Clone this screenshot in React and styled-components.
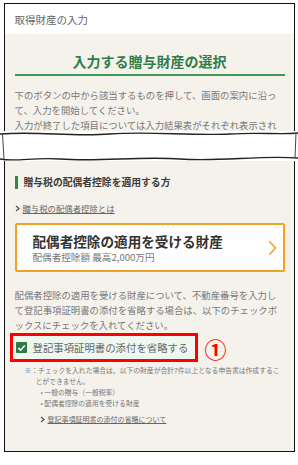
import React from 'react'
import styled, { createGlobalStyle } from 'styled-components'

const Global = createGlobalStyle`
  html, body { margin: 0; padding: 0; background: #fff; }
  body { font-family: "Noto Sans CJK JP", "Noto Sans", sans-serif; }
`

const Page = styled.div`
  width: 298px;
  height: 465px;
  padding-top: 3px;
  box-sizing: border-box;
  display: flex;
  flex-direction: column;
  align-items: center;
`

const Panel = styled.div`
  width: 291px;
  box-sizing: border-box;
  border: 1.5px solid #111;
  border-top-width: ${p => (p.$top ? '1.5px' : '0')};
  border-bottom-width: ${p => (p.$bottom ? '1.5px' : '0')};
  background: #f5f2eb;
  box-shadow: inset -4px 0 0 #f8f6f1;
  overflow: hidden;
  height: ${p => p.$h}px;
`

const Header = styled.div`
  height: 30px;
  background: #fff;
  display: flex;
  align-items: center;
  padding-left: 10px;
  font-size: 10.5px;
  color: #666;
`

const Body = styled.div`
  padding: 0 9px 0 10px;
`

const Title = styled.h1`
  margin: 17px 0 0;
  font-size: 14px;
  font-weight: 700;
  color: #2f7d49;
  text-align: center;
  padding-bottom: 3px;
  border-bottom: 2px solid #3f9a5c;
`

const Para = styled.p`
  margin: ${p => p.$m || '12px 0 0'};
  font-size: 9.4px;
  line-height: 15px;
  color: #777;
`

const Tear = styled.svg`
  display: block;
  width: 298px;
  height: 30px;
`

const Section = styled.h2`
  margin: 14px 0 0;
  display: flex;
  align-items: center;
  gap: 6px;
  font-size: 9.8px;
  font-weight: 700;
  color: #3a3a3a;
  &::before {
    content: '';
    width: 3px;
    height: 13px;
    background: #2f8a4a;
  }
`

const LinkRow = styled.a`
  display: flex;
  align-items: center;
  gap: 3px;
  margin: ${p => p.$m || '13px 0 0'};
  font-size: ${p => p.$fs || 8.4}px;
  color: #666;
  text-decoration: none;
  span { text-decoration: underline; }
`

const Card = styled.div`
  margin-top: 9px;
  border: 2.5px solid #f0a226;
  background: #fff;
  height: 49px;
  box-sizing: border-box;
  display: flex;
  align-items: center;
  padding: 0 6px 0 16px;
  border-radius: 2px;
`

const CardText = styled.div`
  flex: 1;
  display: flex;
  flex-direction: column;
  gap: 1px;
`

const CardTitle = styled.div`
  font-size: 13.6px;
  font-weight: 700;
  color: #333;
  line-height: 18px;
`

const CardSub = styled.div`
  font-size: 9.6px;
  color: #777;
  line-height: 13px;
`

const CheckRow = styled.div`
  display: flex;
  align-items: center;
  gap: 7px;
  margin-left: -5px;
`

const CheckBox = styled.label`
  width: 188px;
  height: 29px;
  box-sizing: border-box;
  border: 3px solid #f00;
  background: #eef7f0;
  display: flex;
  align-items: center;
  gap: 6px;
  padding-left: 3px;
  font-size: 10.4px;
  color: #666;
`

const Tick = styled.span`
  width: 11px;
  height: 11px;
  background: #2e7a45;
  border-radius: 1px;
  display: flex;
  align-items: center;
  justify-content: center;
`

const Marker = styled.span`
  font-size: 22px;
  font-weight: 700;
  color: #f00;
  line-height: 1;
`

const Note = styled.div`
  margin: 3px 0 0 10px;
  font-size: 6.8px;
  line-height: 11px;
  color: #777;
`

const Indent = styled.div`
  padding-left: ${p => p.$pl}px;
`

export default function App() {
  return (
    <>
      <Global />
      <Page>
        <Panel $top $h={128}>
          <Header>取得財産の入力</Header>
          <Body>
            <Title>入力する贈与財産の選択</Title>
            <Para>
              下のボタンの中から該当するものを押して、画面の案内に沿って、入力を開始してください。
              <br />
              入力が終了した項目については入力結果表がそれぞれ表示され
            </Para>
          </Body>
        </Panel>
        <Tear viewBox="0 0 298 30">
          <path
            d="M0 3 C40 0 70 6 110 3 C150 0 190 5 230 3 C260 1 280 4 298 2 L298 27 C260 24 220 31 180 28 C140 25 100 31 60 28 C35 26 15 31 0 28 Z"
            fill="#fff"
          />
          <path d="M0 3 C40 0 70 6 110 3 C150 0 190 5 230 3 C260 1 280 4 298 2" fill="none" stroke="#222" strokeWidth="1.3" />
          <path d="M298 27 C260 24 220 31 180 28 C140 25 100 31 60 28 C35 26 15 31 0 28" fill="none" stroke="#222" strokeWidth="1.3" />
          <path d="M2.5 3 L4 28" stroke="#444" strokeWidth="1" />
          <path d="M296 2 L295 27" stroke="#444" strokeWidth="1" />
        </Tear>
        <Panel $bottom $h={291}>
          <Body>
            <Section>贈与税の配偶者控除を適用する方</Section>
            <LinkRow>
              <svg width="5" height="7" viewBox="0 0 5 7">
                <path d="M1 1 L4 3.5 L1 6" fill="none" stroke="#555" strokeWidth="1.3" />
              </svg>
              <span>贈与税の配偶者控除とは</span>
            </LinkRow>
            <Card>
              <CardText>
                <CardTitle>配偶者控除の適用を受ける財産</CardTitle>
                <CardSub>配偶者控除額 最高2,000万円</CardSub>
              </CardText>
              <svg width="9" height="16" viewBox="0 0 9 16">
                <path d="M1.5 1.5 L7.5 8 L1.5 14.5" fill="none" stroke="#f0a226" strokeWidth="1.6" />
              </svg>
            </Card>
            <Para $m="16px 0 0">
              配偶者控除の適用を受ける財産について、不動産番号を入力して登記事項証明書の添付を省略する場合は、以下のチェックボックスにチェックを入れてください。
            </Para>
            <CheckRow>
              <CheckBox>
                <Tick>
                  <svg width="9" height="8" viewBox="0 0 9 8">
                    <path d="M1.3 4 L3.6 6.2 L7.8 1.5" fill="none" stroke="#fff" strokeWidth="1.6" />
                  </svg>
                </Tick>
                登記事項証明書の添付を省略する
              </CheckBox>
              <Marker>①</Marker>
            </CheckRow>
            <Note>
              ※：チェックを入れた場合は、以下の財産が合計7件以上となる申告書は作成するこ
              <Indent $pl={11}>とができません。</Indent>
              <Indent $pl={16}>• 一般の贈与（一般税率）</Indent>
              <Indent $pl={16}>• 配偶者控除の適用を受ける財産</Indent>
              <LinkRow $m="5px 0 0 15px" $fs={7}>
                <svg width="5" height="7" viewBox="0 0 5 7">
                  <path d="M1 1 L4 3.5 L1 6" fill="none" stroke="#555" strokeWidth="1.3" />
                </svg>
                <span>登記事項証明書の添付の省略について</span>
              </LinkRow>
            </Note>
          </Body>
        </Panel>
      </Page>
    </>
  )
}
